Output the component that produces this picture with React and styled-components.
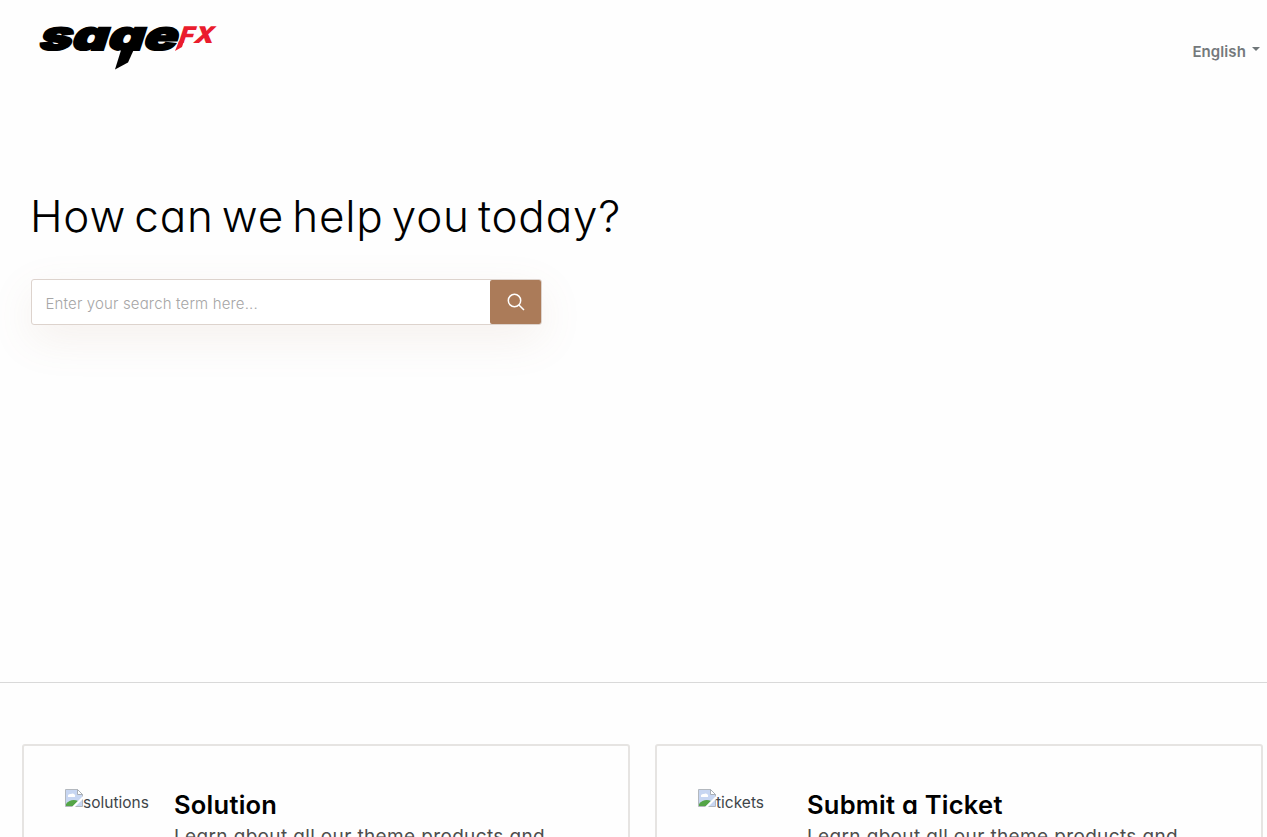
import React from "react";
import styled, { createGlobalStyle } from "styled-components";

const GlobalStyle = createGlobalStyle`
  * {
    box-sizing: border-box;
  }

  body {
    margin: 0;
    background: #fefefe;
    color: #3f4549;
    font-family: Inter, "Liberation Sans", sans-serif;
    font-feature-settings: "cv11";
    font-size: 16px;
  }
`;

const Page = styled.div`
  height: 837px;
  overflow: hidden;
`;

const Hero = styled.section`
  height: 683px;
  border-bottom: 1px solid #d9d9d9;
`;

const Header = styled.header`
  display: flex;
  justify-content: space-between;
  align-items: flex-start;
  padding: 20px 7px 0 36px;
  height: 190px;
`;

const Language = styled.button`
  display: flex;
  align-items: center;
  gap: 6px;
  margin-top: 22px;
  padding: 0;
  border: none;
  background: none;
  color: #74797c;
  font: inherit;
  font-size: 15px;
  line-height: 20px;
  font-weight: 600;
  letter-spacing: 0.1px;
  cursor: pointer;
`;

const Caret = styled.span`
  margin-bottom: 6px;
  border-top: 4px solid #6f7679;
  border-left: 4px solid transparent;
  border-right: 4px solid transparent;
`;

const Title = styled.h1`
  margin: 0 0 36px 30px;
  color: #000;
  font-size: 44px;
  line-height: 53px;
  font-weight: 300;
  letter-spacing: 0.8px;
  word-spacing: -5px;
  white-space: nowrap;
`;

const SearchForm = styled.form`
  display: flex;
  width: 511px;
  height: 46px;
  margin-left: 30.5px;
  border: 1px solid #ddd3cd;
  border-radius: 3px;
  background: #fff;
  box-shadow: 0 14px 44px rgba(168, 120, 88, 0.1);
`;

const SearchInput = styled.input`
  flex: 1;
  min-width: 0;
  padding: 3px 14px 0;
  border: none;
  outline: none;
  background: transparent;
  font: inherit;
  font-feature-settings: inherit;
  font-size: 15px;

  &::placeholder {
    color: #a6a6a6;
    opacity: 1;
    font-weight: 300;
    letter-spacing: 0.15px;
  }
`;

const SearchButton = styled.button`
  display: flex;
  align-items: center;
  justify-content: center;
  width: 51px;
  padding: 0 0 1px 2px;
  border: none;
  border-radius: 2px;
  background: #ab7b59;
  cursor: pointer;
`;

const Cards = styled.section`
  display: grid;
  grid-template-columns: 1fr 1fr;
  gap: 25px;
  padding: 61px 4px 0 22px;
`;

const Card = styled.article`
  display: flex;
  height: 220px;
  padding: 43px 41px 0;
  border: 2px solid #e6e4e2;
  border-radius: 3px;
  background: #fefefe;
`;

const Thumb = styled.div`
  display: flex;
  flex: none;
  width: 109px;
  font-size: 15.5px;
  line-height: 27px;
  white-space: nowrap;
`;

const CardTitle = styled.h2`
  margin: 0;
  color: #000;
  font-size: 25.5px;
  line-height: 32px;
  font-weight: 600;
  letter-spacing: 0.25px;
`;

const CardText = styled.p`
  margin: 2px 0 0;
  color: #4d4d4d;
  font-size: 19px;
  line-height: 28px;
  letter-spacing: 0.36px;
`;

// the wordmark is cut at its baseline, the slash below takes the place of the descender
const Logo = () => (
  <svg width="184" height="56" viewBox="0 0 184 56" role="img" aria-label="sageFX">
    <clipPath id="wordmark">
      <rect width="184" height="31" />
    </clipPath>
    <g clipPath="url(#wordmark)">
      <g fontFamily="Inter, sans-serif" fontWeight="900" transform="skewX(-18)">
        <text
          x="11"
          y="30"
          fontSize="41"
          textLength="138"
          lengthAdjust="spacingAndGlyphs"
          fill="#000"
          stroke="#000"
          strokeWidth="1.8"
        >
          sage
        </text>
        <text
          x="149"
          y="23"
          fontSize="23"
          textLength="35"
          lengthAdjust="spacingAndGlyphs"
          fill="#ea1c2d"
        >
          FX
        </text>
      </g>
    </g>
    <path d="M86 27L79 49.5L92 42.5L99 27z" fill="#000" />
    <path d="M143 21h5l-2 6-7 4z" fill="#ea1c2d" />
  </svg>
);

const MissingImage = () => (
  <svg width="18" height="18" viewBox="0 0 18 18">
    <path d="M.5.5h12l5 5v12H.5z" fill="#c7d6f2" stroke="#b3b8be" />
    <path d="M12.5.5v5h5z" fill="#fff" stroke="#a9afb6" />
    <path d="M3 8a2.4 2.4 0 0 1 3-3 2.6 2.6 0 0 1 4 3z" fill="#fff" />
    <path d="M1 17v-2c3-4 8-5 12-3l-5 5z" fill="#54a547" />
    <path d="M18 7v3l-8 8H7z" fill="#fefefe" />
  </svg>
);

const SearchIcon = () => (
  <svg width="18" height="18" viewBox="0 0 18 18" fill="none" stroke="#fff" strokeWidth="1.5">
    <circle cx="7.5" cy="7.5" r="6.2" />
    <path d="M12 12l5 5" />
  </svg>
);

const cards = [
  { alt: "solutions", title: "Solution" },
  { alt: "tickets", title: "Submit a Ticket" },
];

function App() {
  return (
    <Page>
      <GlobalStyle />
      <Hero>
        <Header>
          <Logo />
          <Language>
            English
            <Caret />
          </Language>
        </Header>
        <Title>How can we help you today?</Title>
        <SearchForm>
          <SearchInput placeholder="Enter your search term here..." />
          <SearchButton type="button" aria-label="Search">
            <SearchIcon />
          </SearchButton>
        </SearchForm>
      </Hero>
      <Cards>
        {cards.map((card) => (
          <Card key={card.alt}>
            <Thumb>
              <MissingImage />
              {card.alt}
            </Thumb>
            <div>
              <CardTitle>{card.title}</CardTitle>
              <CardText>Learn about all our theme products and</CardText>
            </div>
          </Card>
        ))}
      </Cards>
    </Page>
  );
}

export default App;
